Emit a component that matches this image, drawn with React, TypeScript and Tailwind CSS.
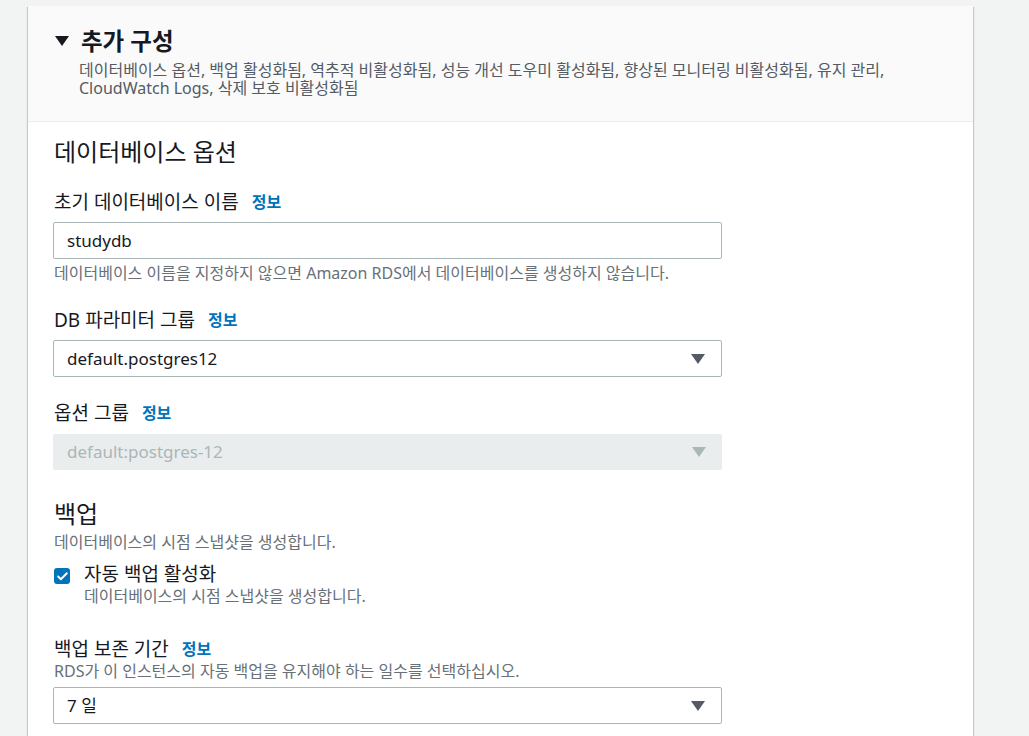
import { Check } from 'lucide-react'

const font = { fontFamily: '"Noto Sans", "Noto Sans CJK KR", sans-serif' }

const Caret = ({ color = '#545b64' }: { color?: string }) => (
  <svg width="14" height="10" viewBox="0 0 14 10">
    <path d="M0 0 H14 L7 10 Z" fill={color} />
  </svg>
)

const Label = ({ text, className = '' }: { text: string; className?: string }) => (
  <div className={`flex items-center gap-[13px] text-[19px] leading-[24px] text-[#16191f] ${className}`}>
    <span>{text}</span>
    <a className="text-[16px] font-bold text-[#0073bb]">정보</a>
  </div>
)

const Select = ({ value, className = '' }: { value: string; className?: string }) => (
  <div
    className={`flex items-center justify-between w-[669px] h-[37px] pl-[13px] pr-[16px] border border-[#aab7b8] rounded-[2px] bg-white text-[17px] text-[#16191f] ${className}`}
  >
    <span>{value}</span>
    <Caret />
  </div>
)

export default function App() {
  return (
    <div className="min-h-screen bg-[#f2f3f3] pl-[28px] pt-[6px]" style={font}>
      <div className="w-[945px] bg-white shadow-[0_1px_1px_0_rgba(0,28,36,0.3),1px_1px_1px_0_rgba(0,28,36,0.15),-1px_1px_1px_0_rgba(0,28,36,0.15)]">
        <div className="bg-[#fafafa] border-b border-[#eaeded] pl-[27px] pt-[20px] pb-[24px]">
          <div className="flex items-center gap-[12px]">
            <Caret color="#16191f" />
            <h2 className="text-[23.5px] leading-[30px] font-bold text-[#16191f]">추가 구성</h2>
          </div>
          <p className="mt-[5px] ml-[24px] w-[830px] text-[16px] leading-[18px] text-[#545b64]">
            데이터베이스 옵션, 백업 활성화됨, 역추적 비활성화됨, 성능 개선 도우미 활성화됨, 향상된 모니터링 비활성화됨, 유지 관리,
            CloudWatch Logs, 삭제 보호 비활성화됨
          </p>
        </div>

        <div className="pl-[25px] pt-[15px] pb-[20px]">
          <h3 className="pl-[1px] text-[24px] leading-[30px] text-[#16191f]">데이터베이스 옵션</h3>

          <Label text="초기 데이터베이스 이름" className="mt-[23px] pl-[1px]" />
          <div className="mt-[8px] flex items-center w-[669px] h-[37px] pl-[13px] border border-[#aab7b8] rounded-[2px] text-[17px] text-[#16191f]">
            studydb
          </div>
          <p className="mt-[4px] pl-[1px] text-[16px] leading-[20px] text-[#687078]">
            데이터베이스 이름을 지정하지 않으면 Amazon RDS에서 데이터베이스를 생성하지 않습니다.
          </p>

          <Label text="DB 파라미터 그룹" className="mt-[25px] pl-[1px]" />
          <Select value="default.postgres12" className="mt-[8px]" />

          <Label text="옵션 그룹" className="mt-[24px] pl-[1px]" />
          <div className="mt-[9px] flex items-center justify-between w-[669px] h-[36px] pl-[14px] pr-[16px] rounded-[2px] bg-[#eaeded] text-[17px] text-[#aab7b8]">
            <span>default:postgres-12</span>
            <Caret color="#aab7b8" />
          </div>

          <h3 className="mt-[29px] pl-[1px] text-[24px] leading-[30px] text-[#16191f]">백업</h3>
          <p className="mt-[3px] pl-[1px] text-[16px] leading-[20px] text-[#687078]">
            데이터베이스의 시점 스냅샷을 생성합니다.
          </p>

          <div className="mt-[10px] flex gap-[14px] pl-[1px]">
            <div className="mt-[6px] w-[16px] h-[16px] rounded-[3px] bg-[#0073bb] flex items-center justify-center">
              <Check size={13} strokeWidth={3.5} color="white" />
            </div>
            <div>
              <div className="text-[19px] leading-[24px] text-[#16191f]">자동 백업 활성화</div>
              <div className="text-[16px] leading-[20px] text-[#687078]">데이터베이스의 시점 스냅샷을 생성합니다.</div>
            </div>
          </div>

          <Label text="백업 보존 기간" className="mt-[31px] pl-[1px]" />
          <p className="pl-[1px] text-[16px] leading-[20px] text-[#687078]">
            RDS가 이 인스턴스의 자동 백업을 유지해야 하는 일수를 선택하십시오.
          </p>
          <Select value="7 일" className="mt-[6px]" />
        </div>
      </div>
    </div>
  )
}
